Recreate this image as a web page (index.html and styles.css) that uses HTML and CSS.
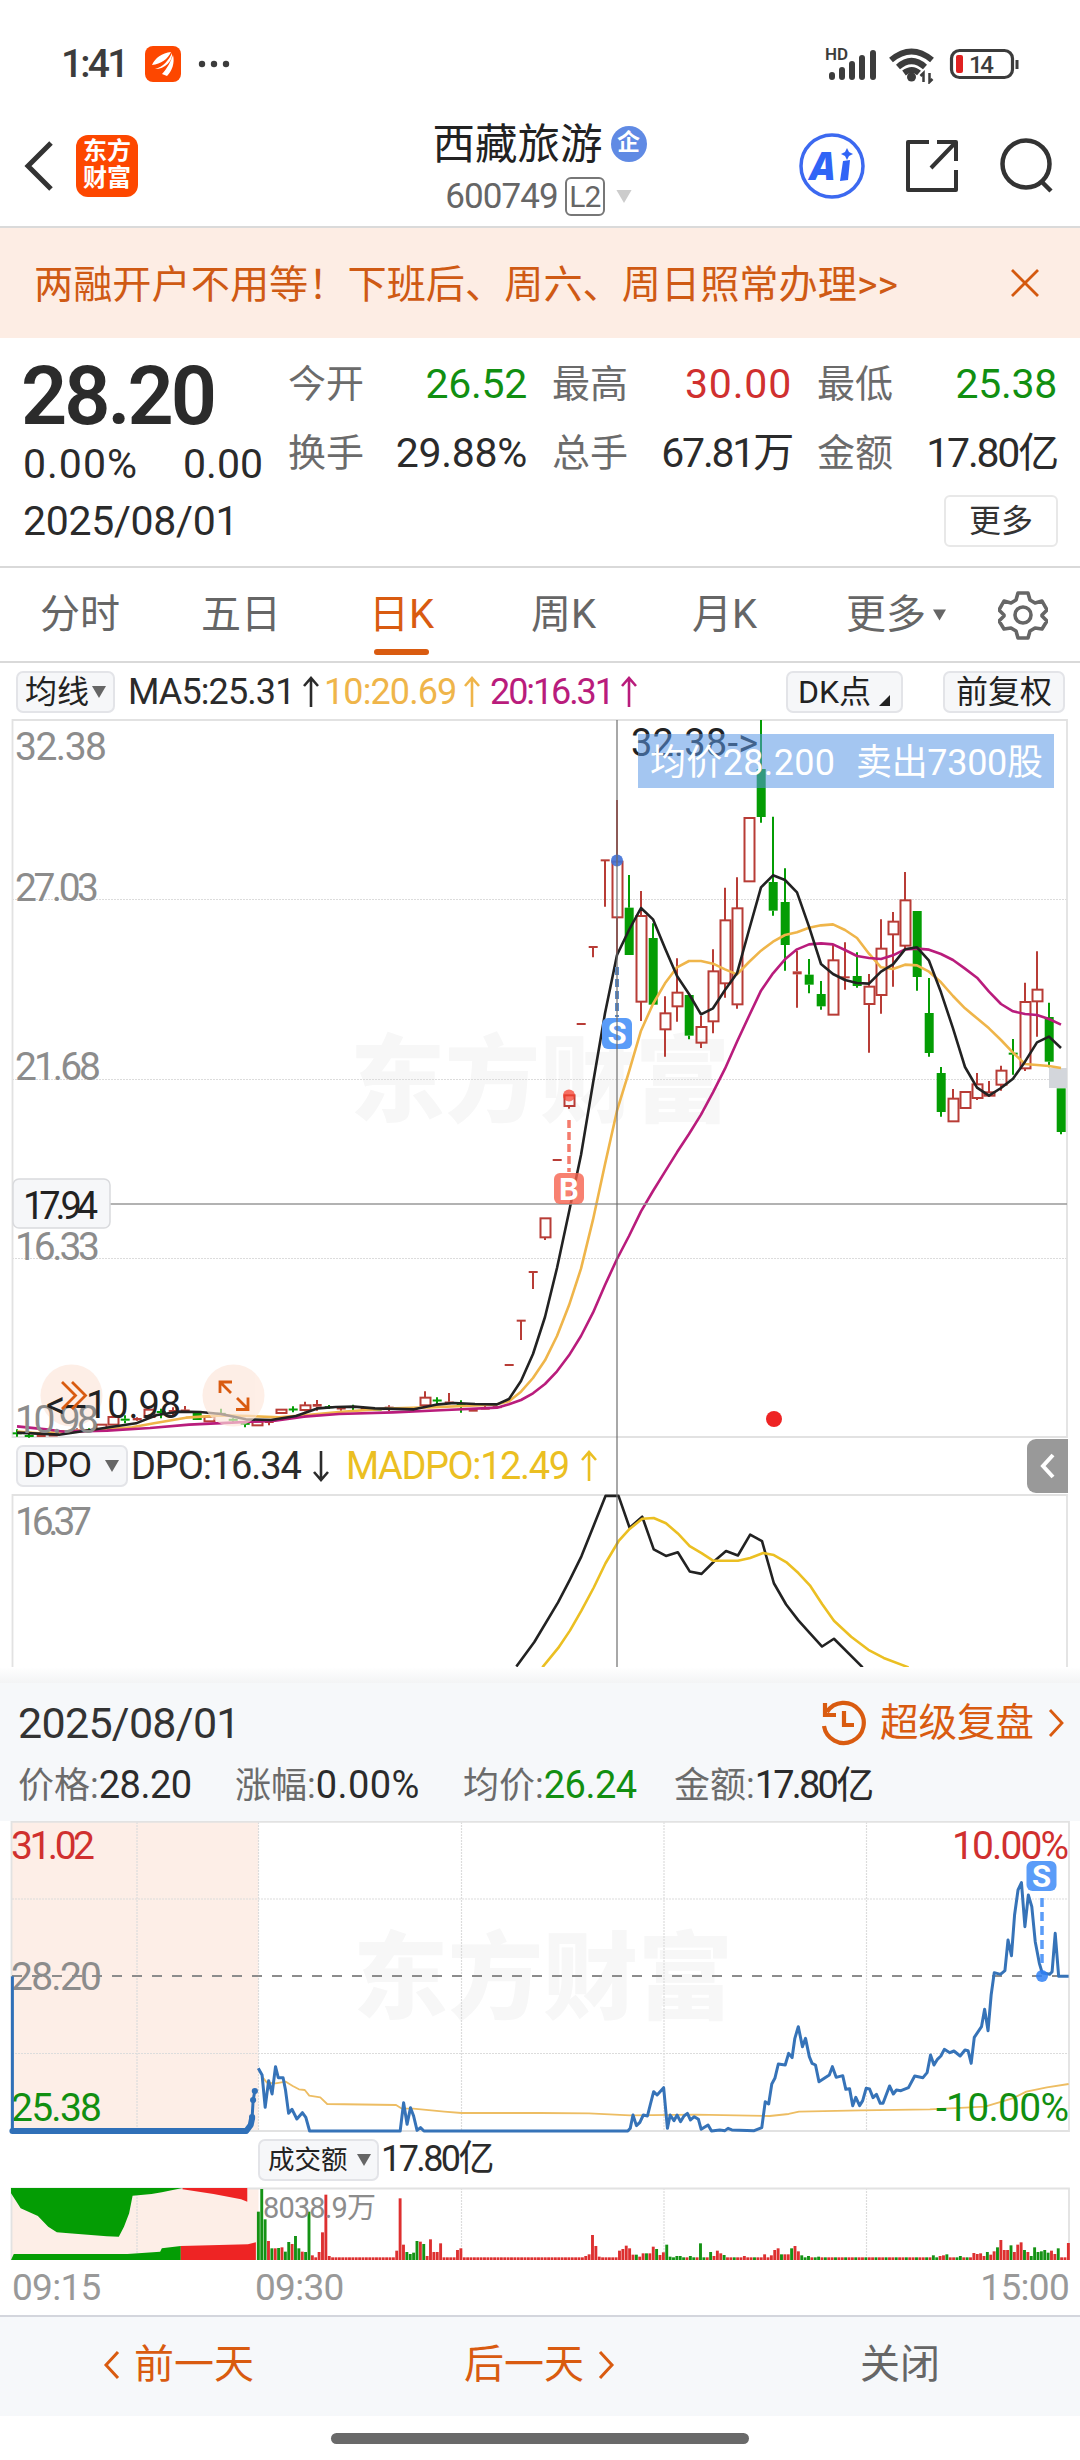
FILE: index.html
```html
<!DOCTYPE html>
<html lang="zh-CN">
<head>
  <meta charset="UTF-8">
  <meta name="viewport" content="width=device-width, initial-scale=1.0">
  <title>西藏旅游 600749</title>
  <link rel="stylesheet" href="styles.css">
</head>
<body>
  <svg width="0" height="0" class="defs">
    <symbol id="up" viewBox="0 0 18 32"><path d="M9 31V2M2 10l7-8 7 8" fill="none" stroke="currentColor" stroke-width="2.6"/></symbol>
    <symbol id="down" viewBox="0 0 18 32"><path d="M9 1v29M2 22l7 8 7-8" fill="none" stroke="currentColor" stroke-width="2.6"/></symbol>
    <symbol id="caret" viewBox="0 0 14 12"><path d="M0 0h14L7 12z" fill="currentColor"/></symbol>
  </svg>

  <div class="status">
    <span class="clock">1:41</span>
    <svg class="notice" width="36" height="36" viewBox="0 0 36 36">
      <rect width="36" height="36" rx="8" fill="#fd4700"/>
      <path d="M7 19C10 12 17 7 26 6 23 13 16 18 7 19zM10 23C18 21 24 14 27 7 28 15 20 23 10 23zM17 28C22 23 26 15 28 9 30 17 27 25 22 30z" fill="#fff"/>
    </svg>
    <svg width="34" height="8" viewBox="0 0 34 8" fill="#3c3c3c"><circle cx="5" cy="4" r="3.2"/><circle cx="17" cy="4" r="3.2"/><circle cx="29" cy="4" r="3.2"/></svg>
    <svg class="signals" width="200" height="40" viewBox="824 44 200 40">
      <text x="825" y="60" class="hd">HD</text>
      <g stroke="#3c3c3c" stroke-width="6" stroke-linecap="round">
        <path d="M832 75v2M842 70v7M852 64v13M862 58v19M873 53v24"/>
      </g>
      <g fill="none" stroke="#3c3c3c" stroke-width="6">
        <path d="M891 60q20.500-17 41 0M898 67q13.500-12 27 0M904 73q8-6 15 0"/>
      </g>
      <circle cx="911.500" cy="77" r="4.500" fill="#3c3c3c"/>
      <path d="M923.500 82v-9l-3 3M929.500 73v9l3-3" fill="none" stroke="#3c3c3c" stroke-width="2.500"/>
      <rect x="951.500" y="50.500" width="61" height="27" rx="8" fill="none" stroke="#3c3c3c" stroke-width="3.200"/>
      <rect x="956" y="55" width="7" height="18" rx="2" fill="#e02020"/>
      <path d="M1017 60v9" stroke="#3c3c3c" stroke-width="3"/>
      <text x="969" y="73" class="battery" textLength="25">14</text>
    </svg>
  </div>

  <header class="header">
    <div class="header-left">
      <svg width="30" height="52" viewBox="0 0 30 52"><path d="M27 3L4 26l23 23" fill="none" stroke="#333" stroke-width="5"/></svg>
      <div class="logo">东方<br>财富</div>
    </div>
    <div class="title">
      <div class="name">西藏旅游<span class="badge">企</span></div>
      <div class="code">600749<span class="level">L2</span><svg width="20" height="13" class="light"><use href="#caret"/></svg></div>
    </div>
    <div class="header-right">
      <svg width="66" height="66" viewBox="0 0 66 66">
        <circle cx="33" cy="33" r="31" fill="none" stroke="#3c69f0" stroke-width="3.500"/>
        <text x="11" y="47" class="ai" textLength="28">A</text>
        <path d="M44 28l7-1-2 20-8 1z" fill="#3064f6"/>
        <path d="M48 15l2 4 4 2-4 2-2 4-2-4-4-2 4-2z" fill="#3064f6"/>
      </svg>
      <svg width="54" height="54" viewBox="0 0 54 54" fill="none" stroke="#333" stroke-width="4" stroke-linejoin="round"><path d="M24 3H3v48h48V31M32 3h19v19M51 3L26 29"/></svg>
      <svg width="56" height="58" viewBox="0 0 56 58" fill="none" stroke="#333" stroke-width="4.500"><circle cx="27" cy="27" r="23.500"/><path d="M42 44l10 10"/></svg>
    </div>
  </header>

  <div class="banner">
    <span>两融开户不用等！下班后、周六、周日照常办理&gt;&gt;</span>
    <svg width="30" height="30" viewBox="0 0 30 30"><path d="M2 2l26 26M28 2L2 28" stroke="#d4590f" stroke-width="2.800"/></svg>
  </div>

  <section class="quote">
    <div class="last">
      <div class="price">28.20</div>
      <div class="change"><span class="pct">0.00%</span><span>0.00</span></div>
    </div>
    <div class="stats">
      <div><label>今开</label><b class="green">26.52</b></div>
      <div><label>最高</label><b class="red wide">30.00</b></div>
      <div><label>最低</label><b class="green">25.38</b></div>
      <div><label>换手</label><b>29.88%</b></div>
      <div><label>总手</label><b class="tight">67.81万</b></div>
      <div><label>金额</label><b class="tight">17.80亿</b></div>
    </div>
    <div class="date">2025/08/01</div>
    <button class="more">更多</button>
  </section>

  <nav class="tabs">
    <span>分时</span>
    <span>五日</span>
    <span class="active">日K</span>
    <span>周K</span>
    <span>月K</span>
    <span class="tab-more">更多<svg width="13" height="12"><use href="#caret"/></svg></span>
    <svg width="50" height="50" viewBox="0 0 50 50" fill="none" stroke="#666" stroke-width="3.600" stroke-linejoin="round">
      <path d="M20 3h10l2 7 5 3 7-2 5 9-5 5 0 1 5 5-5 8-7-1-5 3-2 7H20l-2-7-5-3-7 1-5-8 5-5v-1l-5-5 5-9 7 2 5-3z"/>
      <circle cx="25" cy="25" r="8"/>
    </svg>
  </nav>

  <div class="legend">
    <span class="pill ma-pill">均线<svg width="14" height="12"><use href="#caret"/></svg></span>
    <span class="ma ma5">MA5:25.31<svg width="18" height="32"><use href="#up"/></svg></span>
    <span class="ma ma10">10:20.69<svg width="18" height="32"><use href="#up"/></svg></span>
    <span class="ma ma20">20:16.31<svg width="18" height="32"><use href="#up"/></svg></span>
    <span class="pill dk">DK点<svg width="11" height="11" viewBox="0 0 11 11"><path d="M11 0v11H0z" fill="#222"/></svg></span>
    <span class="pill fq">前复权</span>
  </div>

  <div class="charts">
    <svg class="kline" width="1080" height="719" viewBox="0 719 1080 719">
      <text x="350" y="1115" class="mark" textLength="380">东方财富</text>
      <g class="grid">
        <path d="M12 899.500h1055M12 1079.500h1055M12 1258.500h1055"/>
      </g>
      <path class="frame" d="M12.500 1437V720H1067v717z"/>
      <rect x="1049" y="1068" width="18" height="20" fill="#d3d6db"/>
      <g id="candles"></g>
      <g id="averages"></g>
      <g class="axis">
        <text x="15" y="760" textLength="92">32.38</text>
        <text x="15" y="901" textLength="84">27.03</text>
        <text x="15" y="1080" textLength="86">21.68</text>
        <text x="15" y="1260" textLength="85">16.33</text>
      </g>
      <g fill="#fde6da" opacity=".65"><circle cx="71.500" cy="1395.500" r="31"/><circle cx="233.500" cy="1395.500" r="31"/></g>
      <g class="axis">
        <text x="15" y="1433" textLength="84">10.98</text>
      </g>
      <text x="46" y="1418" class="extreme" textLength="135">&lt;--10.98</text>
      <g class="tool">
        <path d="M62 1382l13.500 13.500L62 1409M72 1382l13.500 13.500L72 1409"/>
        <path d="M220 1393v-11h12M221 1383l10 10M236 1409.500h12v-12M247 1408l-10-10"/>
      </g>
      <text x="631" y="756" class="extreme" textLength="127">32.38-&gt;</text>
      <rect x="638" y="734" width="416" height="54" fill="#5a97e6" opacity=".55"/>
      <text x="650" y="775" class="tip" textLength="185">均价28.200</text>
      <text x="856" y="775" class="tip" textLength="187">卖出7300股</text>
      <path d="M110 1204h957" stroke="#999" stroke-width="1.500"/>
      <path d="M617 967v50" stroke="#5a8ac8" stroke-width="4" stroke-dasharray="8 4"/>
      <circle cx="617" cy="860.500" r="6" fill="#3f70d6" opacity=".9"/>
      <path d="M569 1120v52" stroke="#f47b6c" stroke-width="3.500" stroke-dasharray="8 4"/>
      <circle cx="569" cy="1095.500" r="6" fill="#f5402f" opacity=".75"/>
      <rect x="602" y="1018" width="30" height="31" rx="6" fill="#5a9cf8"/>
      <text x="617" y="1044" class="flag">S</text>
      <rect x="554" y="1173" width="30" height="31" rx="6" fill="#f6614e" opacity=".8"/>
      <text x="569" y="1200" class="flag">B</text>
      <rect x="13" y="1179" width="97" height="49" rx="6" fill="#f6f7f9" stroke="#d9dadd" stroke-width="1.500"/>
      <text x="23" y="1219" class="extreme" textLength="75">17.94</text>
      <circle cx="774" cy="1419" r="8" fill="#ee2424"/>
    </svg>
    <div class="dpo-row">
      <span class="pill dpo-pill">DPO<svg width="14" height="12"><use href="#caret"/></svg></span>
      <span class="dpo">DPO:16.34<svg width="18" height="34"><use href="#down"/></svg></span>
      <span class="dpo madpo">MADPO:12.49<svg width="18" height="34"><use href="#up"/></svg></span>
      <span class="fold"><svg width="16" height="26" viewBox="0 0 16 26"><path d="M13 2L3 13l10 11" fill="none" stroke="#fff" stroke-width="4"/></svg></span>
    </div>
    <svg class="dpo-chart" width="1080" height="173" viewBox="0 1494 1080 173">
      <path class="frame" d="M12.500 1667V1495H1067V1667"/>
      <text x="15" y="1535" class="axis" textLength="77">16.37</text>
      <g id="dpo"></g>
    </svg>
    <div class="crosshair"></div>
  </div>

  <section class="review">
    <div class="review-top">
      <span class="day">2025/08/01</span>
      <span class="replay">
        <svg width="44" height="46" viewBox="0 0 44 46" fill="none" stroke="#d95b10" stroke-width="4.200"><path d="M5 12a20 20 0 1 1-3 14M3 3v12h11M22 11v14h10"/></svg>
        超级复盘
        <svg width="16" height="30" viewBox="0 0 16 30" fill="none" stroke="#d95b10" stroke-width="2.800"><path d="M2 2l12 13L2 28"/></svg>
      </span>
    </div>
    <div class="review-info">
      <span class="i1">价格:<b>28.20</b></span>
      <span class="i2">涨幅:<b class="wide">0.00%</b></span>
      <span class="i3">均价:<b class="green">26.24</b></span>
      <span>金额:<b class="tight">17.80亿</b></span>
    </div>
  </section>

  <div class="minute">
    <svg width="1080" height="316" viewBox="0 1821 1080 316">
      <rect x="12" y="1822" width="246.500" height="309" fill="#fdeee7"/>
      <text x="353" y="2012" class="mark" textLength="380">东方财富</text>
      <g class="grid"><path d="M12 1899h1057M12 2053.500h1057M137 1822v309M258.500 1822v309M461.500 1822v309M664 1822v309M866.500 1822v309"/></g>
      <path class="frame" d="M11.500 1821.800H1069V2131H11.500z"/>
      <path d="M12 1976h1057" stroke="#8c8c8c" stroke-width="2" stroke-dasharray="10 10"/>
      <g class="axis">
        <text x="11" y="1859" class="t-red" textLength="84">31.02</text>
        <text x="11" y="1990" textLength="91">28.20</text>
        <text x="11" y="2121" class="t-green" textLength="91">25.38</text>
        <text x="952" y="1859" class="t-red" textLength="117">10.00%</text>
      </g>
      <g id="price"></g>
      <text x="936" y="2121" class="axis t-green" textLength="133">-10.00%</text>
      <path d="M1042 1898v68" stroke="#5a9cf8" stroke-width="3.500" stroke-dasharray="9 5"/>
      <circle cx="1042" cy="1976" r="6" fill="#2f80f5" opacity=".85"/>
      <rect x="1026.500" y="1861" width="30" height="30" rx="6" fill="#5a9cf8"/>
      <text x="1041.500" y="1887" class="flag">S</text>
    </svg>
    <div class="turnover">
      <span class="pill">成交额<svg width="14" height="12"><use href="#caret"/></svg></span>
      <span class="sum">17.80亿</span>
    </div>
    <svg width="1080" height="77" viewBox="0 2186 1080 77">
      <rect x="12" y="2188" width="246.500" height="72" fill="#fdeee7"/>
      <g class="grid"><path d="M137 2188v72M461.500 2188v72M664 2188v72M866.500 2188v72"/></g>
      <path class="frame" d="M11.500 2260V2188.500H1069V2260"/>
      <g id="volume"></g>
      <text x="263" y="2218" class="vol-label" textLength="113">8038.9万</text>
    </svg>
    <div class="times"><span>09:15</span><span>09:30</span><span>15:00</span></div>
  </div>

  <footer class="footer">
    <span class="prev"><svg width="18" height="30" viewBox="0 0 18 30"><path d="M15 2L3 15l12 13"/></svg>前一天</span>
    <span class="next">后一天<svg width="18" height="30" viewBox="0 0 18 30"><path d="M3 2l12 13L3 28"/></svg></span>
    <span class="close">关闭</span>
  </footer>
  <div class="home"></div>

  <script src="chart.js"></script>
</body>
</html>
```
FILE: styles.css
```css
* {
  margin: 0;
  padding: 0;
  box-sizing: border-box;
}

body {
  width: 1080px;
  height: 2460px;
  background: #fff;
  font-family: Roboto, "Noto Sans CJK SC", sans-serif;
  color: #2b2b2b;
  overflow: hidden;
}

svg {
  display: block;
  flex: none;
}

.defs {
  position: absolute;
}

.green { color: #118f11; }
.red { color: #d0302f; }

.status {
  height: 92px;
  padding: 36px 56px 0 61px;
  display: flex;
  align-items: center;
}

.clock {
  width: 84px;
  font-size: 39px;
  font-weight: 500;
  letter-spacing: -2.8px;
  color: #3c3c3c;
}

.notice {
  margin-right: 16px;
}

.signals {
  margin-left: auto;
}

.hd {
  font-size: 17px;
  font-weight: 600;
  fill: #3c3c3c;
}

.battery {
  font-size: 24px;
  font-weight: 500;
  fill: #3c3c3c;
}

.header {
  height: 136px;
  padding: 0 25px 0 24px;
  display: grid;
  grid-template-columns: 1fr auto 1fr;
  align-items: center;
  border-bottom: 2px solid #dadada;
}

.header-left {
  display: flex;
  align-items: center;
  gap: 22px;
  padding-top: 14px;
}

.logo {
  width: 62px;
  height: 62px;
  border-radius: 12px;
  background: #fd4700;
  color: #fff;
  font-size: 24px;
  line-height: 27px;
  font-weight: 700;
  text-align: center;
  padding-top: 3px;
}

.title {
  color: #222;
  padding-top: 21px;
}

.name {
  display: flex;
  align-items: center;
  font-size: 42.5px;
  line-height: 54px;
}

.badge {
  width: 36px;
  height: 36px;
  margin-left: 8px;
  margin-bottom: 2px;
  border-radius: 50%;
  background: #608ae4;
  color: #fff;
  font-size: 23px;
  font-weight: 700;
  line-height: 34px;
  text-align: center;
}

.code {
  display: flex;
  align-items: center;
  justify-content: center;
  font-size: 35px;
  letter-spacing: -0.9px;
  line-height: 50px;
  color: #666;
}

.level {
  width: 40px;
  height: 39px;
  margin: 0 9px 0 7px;
  border: 2px solid #777;
  border-radius: 6px;
  font-size: 30px;
  line-height: 36px;
  text-align: center;
}

.light { color: #ccc; }

.header-right {
  display: flex;
  align-items: center;
  justify-content: flex-end;
  gap: 40px;
  padding-top: 14px;
}

.ai {
  font-family: "Noto Sans", sans-serif;
  font-size: 38px;
  font-weight: 900;
  font-style: italic;
  fill: #3064f6;
}

.banner {
  height: 110px;
  padding: 0 40px 0 34px;
  display: flex;
  align-items: center;
  justify-content: space-between;
  background: #fdede4;
  color: #cf5a14;
  font-size: 39.2px;
}

.banner span {
  padding-bottom: 5px;
}

.quote {
  height: 230px;
  padding: 20px 22px 0 23px;
  display: grid;
  grid-template-columns: 265px 1fr;
  grid-template-rows: 137px 52px;
  border-bottom: 2px solid #d9d9d9;
}

.price {
  font-size: 81px;
  line-height: 84px;
  font-weight: 600;
  letter-spacing: -3px;
  margin-left: -2px;
  margin-top: -3px;
}

.change {
  display: flex;
  justify-content: space-between;
  width: 240px;
  font-size: 41px;
  line-height: 47px;
  padding-top: 2px;
}

.pct { letter-spacing: 1px; }

.stats {
  display: grid;
  grid-template-columns: 239px 240px 240px;
  grid-auto-rows: 69px;
  column-gap: 25px;
}

.stats div {
  display: flex;
  justify-content: space-between;
  line-height: 53px;
}

.stats label {
  font-size: 38px;
  color: #6b6b6b;
}

.stats b {
  font-size: 41px;
  font-weight: 400;
  letter-spacing: -0.3px;
}

.stats .wide { letter-spacing: 0.8px; }
.stats .tight { letter-spacing: -2.2px; }

.date {
  font-size: 41px;
  line-height: 52px;
  letter-spacing: -0.3px;
}

.more {
  justify-self: end;
  width: 114px;
  height: 52px;
  font: inherit;
  font-size: 32px;
  color: #333;
  line-height: 46px;
  background: #fff;
  border: 2px solid #e8e8e8;
  border-radius: 6px;
}

.tabs {
  height: 95px;
  padding: 0 31px 0 40px;
  display: flex;
  align-items: center;
  font-size: 40px;
  line-height: 93px;
  color: #666;
  border-bottom: 2px solid #d9d9d9;
}

.tabs span { width: 161px; }
.tabs span:nth-child(2) { width: 168px; }
.tabs span:nth-child(3) { width: 162px; }
.tabs span:nth-child(5) { width: 154px; }

.tabs .active {
  color: #d95b10;
  position: relative;
}

.active::after {
  content: "";
  position: absolute;
  left: 5px;
  bottom: 6px;
  width: 55px;
  height: 6px;
  border-radius: 3px;
  background: #d95b10;
}

.tabs .tab-more {
  display: flex;
  align-items: center;
  gap: 7px;
  width: 152px;
}

.legend {
  height: 56px;
  padding: 1px 15px 0 16px;
  display: flex;
  align-items: center;
}

.pill {
  height: 42px;
  display: flex;
  align-items: center;
  background: #f6f7f9;
  border: 2px solid #e3e4e8;
  border-radius: 7px;
  font-size: 32px;
  line-height: 36px;
  color: #222;
}

.pill svg { color: #666; }

.ma-pill {
  width: 99px;
  padding-left: 7px;
  gap: 3px;
  margin-right: 13px;
}

.ma {
  display: flex;
  align-items: center;
  gap: 7px;
  font-size: 36px;
  letter-spacing: -0.9px;
}

.ma5 { width: 196px; }
.ma10 { width: 166px; color: #efb54a; }
.ma20 { color: #b91c7c; letter-spacing: -2.1px; }

.dk {
  width: 117px;
  padding-left: 10px;
  margin-left: auto;
  gap: 8px;
}

.dk svg { margin-top: 18px; }

.fq {
  width: 122px;
  margin-left: 40px;
  padding-left: 11px;
}

.charts {
  position: relative;
  height: 948px;
}

.crosshair {
  position: absolute;
  left: 616px;
  top: 1px;
  width: 2px;
  height: 947px;
  background: rgba(110, 110, 110, .6);
}

.mark {
  font-size: 95px;
  font-weight: 900;
  fill: #f7f7f7;
}

.grid {
  stroke: #dcdcdc;
  stroke-width: 1.2;
  stroke-dasharray: 2 1;
}

.frame {
  fill: none;
  stroke: #e2e2e2;
  stroke-width: 1.8;
}

.axis {
  font-size: 39px;
  fill: #8c8c8c;
}

.t-red { fill: #d0302f; }
.t-green { fill: #118f11; }

.extreme {
  font-size: 38px;
  fill: #222;
}

.tip {
  font-size: 36px;
  fill: #fff;
}

.tool {
  fill: none;
  stroke: #d95b10;
  stroke-width: 2.8;
}

.flag {
  font-size: 31px;
  font-weight: 700;
  fill: #fff;
  text-anchor: middle;
}

.dpo-row {
  height: 56px;
  padding-left: 16px;
  display: flex;
  align-items: center;
}

.dpo-pill {
  width: 112px;
  padding-left: 5px;
  gap: 13px;
  margin-right: 3px;
  font-size: 35px;
}

.dpo {
  display: flex;
  align-items: center;
  gap: 11px;
  width: 215px;
  font-size: 38px;
  letter-spacing: -1.1px;
}

.madpo {
  width: auto;
  color: #ebbf22;
  letter-spacing: -1.4px;
}

.fold {
  width: 41px;
  height: 54px;
  margin: 0 12px 0 auto;
  display: flex;
  align-items: center;
  justify-content: center;
  background: #999;
  border-radius: 9px 0 0 9px;
}

.line {
  fill: none;
  stroke-width: 3;
  stroke-linejoin: round;
}

.scaled * {
  vector-effect: non-scaling-stroke;
}

.review {
  height: 154px;
  background: linear-gradient(#fff, #f3f4f5 16px, #f6f8fa 16px);
  padding: 29px 16px 0 18px;
}

.review-top {
  display: flex;
  justify-content: space-between;
  align-items: center;
  height: 54px;
}

.day {
  font-size: 43px;
  letter-spacing: -0.7px;
  color: #333;
}

.replay {
  display: flex;
  align-items: center;
  gap: 14px;
  font-size: 38.5px;
  line-height: 50px;
  color: #d95b10;
}

.review-info {
  display: flex;
  padding-top: 11px;
  font-size: 36px;
  line-height: 48px;
  color: #6b6b6b;
}

.review-info b {
  font-weight: 400;
  font-size: 38px;
  letter-spacing: -0.5px;
}

.review-info .wide { letter-spacing: 0.4px; }
.review-info .tight { letter-spacing: -2.8px; }

.review-info b:not(.green) { color: #2b2b2b; }

.i1 { width: 217px; }
.i2 { width: 228px; }
.i3 { width: 211px; }

.turnover {
  height: 49px;
  padding: 2px 0 0 258px;
  display: flex;
  gap: 2px;
  font-size: 36px;
  line-height: 41px;
}

.sum { letter-spacing: -2.6px; }

.turnover .pill {
  width: 121px;
  padding-left: 8px;
  gap: 9px;
  font-size: 26.5px;
}

.vol-label {
  font-size: 29px;
  fill: #8c8c8c;
}

.times {
  height: 52px;
  padding: 1px 11px 0 12px;
  display: flex;
  font-size: 37px;
  line-height: 48px;
  letter-spacing: -0.7px;
  color: #999;
}

.times span:first-child { width: 243px; }
.times span:last-child { margin-left: auto; }

.footer {
  height: 101px;
  display: flex;
  align-items: center;
  padding-bottom: 3px;
  background: #f6f8fa;
  border-top: 2px solid #d4d6dd;
  font-size: 40px;
  line-height: 50px;
  color: #d95b10;
}

.footer span {
  display: flex;
  align-items: center;
  gap: 13px;
}

.footer svg {
  fill: none;
  stroke: #d95b10;
  stroke-width: 3;
}

.prev { width: 361px; padding-left: 103px; }
.next { width: 499px; padding-left: 103px; }
.footer .close { color: #666; }

.home {
  width: 418px;
  height: 11px;
  margin: 17px auto 0;
  border-radius: 6px;
  background: #696969;
}
```
FILE: chart.js
```js
const NS = 'http://www.w3.org/2000/svg';
const RED = '#b83c36';
const GREEN = '#049d04';

function add(parent, tag, attrs) {
  const el = document.createElementNS(NS, tag);
  for (const k in attrs) el.setAttribute(k, attrs[k]);
  parent.appendChild(el);
  return el;
}

// daily candles: colour, high, body top, body bottom, low (thirds of a pixel)
const candles = [
  'g 2188 2198 2202 2210', 'g 2200 2207 2209 2213', 'r 2203 2204 2211 2211', 'r 2203 2205 2208 2208', 'r 2192 2192 2194 2194',
  'r 2185 2188 2194 2196', 'g 2185 2188 2194 2194', 'r 2174 2174 2188 2188', 'r 2150 2151 2174 2174', 'g 2146 2156 2162 2170',
  'r 2152 2154 2161 2163', 'r 2127 2129 2151 2151', 'g 2126 2133 2139 2155', 'r 2122 2131 2135 2145', 'r 2118 2129 2134 2138',
  'g 2133 2133 2160 2160', 'r 2148 2150 2164 2164', 'g 2126 2140 2143 2146', 'g 2155 2157 2162 2166', 'g 2165 2170 2173 2182',
  'r 2163 2165 2176 2176', 'r 2160 2164 2168 2176', 'r 2128 2129 2139 2142', 'g 2119 2127 2130 2137', 'r 2105 2116 2130 2134',
  'r 2100 2112 2120 2132', 'g 2115 2120 2123 2127', 'r 2121 2125 2126 2132', 'g 2114 2120 2122 2134', 'r 2126 2126 2128 2128',
  'g 2128 2128 2130 2130', 'r 2116 2120 2127 2133', 'r 2123 2123 2127 2127', 'g 2124 2124 2128 2128', 'r 2074 2093 2116 2116',
  'g 2092 2100 2103 2112', 'r 2079 2105 2110 2110', 'g 2101 2110 2114 2138', 'r 2125 2126 2135 2135', 'r 2115 2123 2129 2129',
  'r 2120 2120 2123 2123', 'r 1995 1995 1995 1995', 'r 1862 1862 1862 1920', 'r 1716 1716 1716 1767', 'r 1555 1555 1612 1620',
  'r 1380 1380 1380 1380', 'r 1186 1186 1218 1226', 'r 972 972 972 972', 'r 741 741 741 772', 'r 481 481 481 620',
  'r 300 485 652 765', 'g 525 623 765 765', 'r 573 648 905 963', 'g 670 714 914 914', 'r 889 940 988 1070',
  'r 775 878 919 965', 'g 883 885 1007 1018', 'r 948 981 1028 1044', 'r 748 814 964 1000', 'r 563 661 850 893',
  'r 532 625 913 926', 'r 354 354 544 544', 'g 60 207 351 368', 'g 350 546 632 647', 'g 505 606 735 812',
  'r 752 814 823 923', 'g 777 824 854 880', 'g 843 882 919 929', 'r 735 781 944 944', 'r 727 831 833 869',
  'g 757 828 858 863', 'r 822 860 912 1058', 'r 658 746 885 941', 'r 636 665 703 860', 'r 516 601 737 745',
  'g 633 633 831 872', 'g 834 939 1059 1070', 'g 1101 1119 1236 1250', 'r 1167 1196 1264 1264', 'r 1176 1176 1224 1224',
  'r 1119 1153 1194 1200', 'r 1143 1177 1187 1187', 'r 1097 1112 1154 1172', 'g 1017 1058 1064 1124', 'r 848 906 1105 1113',
  'r 754 869 904 1010', 'g 908 951 1085 1102', 'g 1165 1165 1296 1303'
];

const py = v => 700 + v / 3;
const first = 17;
const step = 12;
const kbox = document.getElementById('candles');

candles.forEach((row, i) => {
  const [c, ...n] = row.split(' ');
  const [hi, top, bot, lo] = n.map(v => py(Number(v)));
  const x = first + i * step;
  const color = c == 'r' ? RED : GREEN;
  add(kbox, 'path', { d: `M${x} ${hi}V${top}M${x} ${bot}V${lo}`, stroke: color, 'stroke-width': 2 });
  if (c == 'r' && bot - top > 3) {
    add(kbox, 'rect', { x: x - 4.5, y: top, width: 10, height: bot - top, fill: 'none', stroke: color, 'stroke-width': 2 });
  } else {
    const h = Math.max(bot - top, 2);
    add(kbox, 'rect', { x: x - 4.3, y: (top + bot - h) / 2, width: 9, height: h, fill: color });
  }
});

// moving averages: a short list of [x, y] for the flat part, then one value per day from x = 497
const averages = [
  ['#efb54a',
    [[17, 2195], [39, 2200], [96, 2190], [132, 2182], [154, 2170], [186, 2153], [221, 2146], [250, 2148], [279, 2152], [304, 2146], [339, 2136], [386, 2126], [429, 2122], [464, 2118]],
    [2113, 2104, 2075, 2034, 1981, 1908, 1816, 1706, 1559, 1393, 1232, 1115, 992, 912, 850, 802, 783, 783, 791, 808, 823, 786, 752, 725, 705, 697, 683, 676, 673, 690, 714, 761, 802, 807, 794, 796, 815, 847, 888, 925, 955, 985, 1020, 1058, 1092, 1095, 1098, 1104]],
  ['#b91c7c',
    [[17, 2179], [46, 2188], [64, 2195], [107, 2192], [150, 2184], [189, 2174], [232, 2168], [275, 2162], [304, 2150], [339, 2142], [393, 2137], [446, 2130]],
    [2123, 2113, 2100, 2080, 2052, 2014, 1966, 1908, 1838, 1755, 1677, 1608, 1534, 1473, 1415, 1357, 1302, 1244, 1177, 1106, 1025, 948, 872, 820, 778, 748, 733, 730, 733, 750, 768, 774, 777, 766, 748, 746, 749, 762, 780, 806, 833, 875, 912, 934, 942, 945, 957, 974]],
  ['#222',
    [[17, 2198], [59, 2204], [96, 2188], [136, 2170], [157, 2145], [179, 2135], [200, 2136], [221, 2142], [246, 2158], [271, 2160], [296, 2148], [318, 2125], [336, 2121], [354, 2120], [375, 2125], [414, 2128], [436, 2114], [454, 2109], [475, 2112]],
    [2113, 2097, 2043, 1962, 1851, 1704, 1536, 1365, 1150, 940, 765, 690, 624, 658, 745, 828, 882, 943, 925, 870, 820, 690, 562, 526, 540, 577, 680, 792, 822, 840, 849, 851, 815, 793, 748, 742, 782, 877, 985, 1101, 1163, 1187, 1164, 1136, 1085, 1027, 1010, 1044]]
];

averages.forEach(([color, flat, days]) => {
  const pts = flat.concat(days.map((v, i) => [497 + i * step, v])).map(p => [p[0], py(p[1])]);
  add(document.getElementById('averages'), 'polyline', { class: 'line', style: 'stroke-width:2.6', points: pts.join(' '), stroke: color });
});

// DPO
const dpo = document.getElementById('dpo');
dpo.setAttribute('class', 'scaled');
dpo.setAttribute('transform', 'translate(480 1040) scale(.38265 .40816)');
add(dpo, 'polyline', { class: 'line', style: 'stroke-width:2.6', stroke: '#222', points: '95,1535 142,1475 204,1378 235,1322 265,1265 297,1190 328,1117 362,1117 391,1195 424,1168 454,1248 486,1264 517,1255 548,1302 579,1308 612,1277 643,1252 674,1263 706,1212 737,1228 768,1331 800,1383 832,1422 862,1453 894,1486 925,1467 1000,1537' });
add(dpo, 'polyline', { class: 'line', style: 'stroke-width:2.6', stroke: '#ebbf22', points: '163,1537 204,1490 235,1447 265,1398 297,1342 328,1282 362,1228 391,1198 424,1173 454,1171 486,1184 517,1209 548,1240 579,1257 610,1276 674,1276 706,1269 740,1257 768,1262 800,1279 832,1306 862,1336 894,1382 925,1423 970,1462 1015,1494 1055,1514 1120,1537' });

// minute chart
const price = document.getElementById('price');
const SCALE = 'translate(0 1810) scale(.34439 .33333)';
price.setAttribute('class', 'scaled');
price.setAttribute('transform', SCALE);
add(price, 'polyline', { class: 'line', style: 'stroke-width:1.8', stroke: '#edbd63', points: '761,800 775,818 800,820 830,815 850,828 868,838 885,840 898,857 930,862 950,882 1150,885 1165,895 1200,896 1290,905 1340,909 1568,909 1710,910 1830,916 2020,914 2235,918 2290,912 2320,905 2500,901 2700,898 2860,890 2940,865 2980,845 3040,832 3103,822' });
add(price, 'polyline', { class: 'line', stroke: '#3673b8', points: '750,775 761,795 770,892 780,812 790,852 800,770 808,803 822,803 829,840 838,910 848,898 862,927 878,908 888,922 899,963 1162,963 1172,878 1182,943 1192,893 1201,918 1211,961 1221,953 1231,963 1823,963 1830,955 1838,915 1848,947 1858,937 1868,915 1880,918 1888,885 1898,845 1908,855 1927,833 1938,955 1946,915 1957,932 1966,915 1976,935 1986,918 1996,910 2005,930 2016,920 2028,928 2036,958 2056,945 2066,963 2090,960 2105,962 2114,955 2125,960 2190,962 2212,953 2222,875 2232,882 2241,822 2250,805 2260,762 2280,765 2290,730 2300,743 2308,685 2318,650 2330,710 2339,685 2350,740 2358,760 2368,765 2378,815 2408,795 2417,770 2428,802 2447,797 2456,838 2467,836 2476,887 2485,862 2496,887 2505,872 2515,835 2525,837 2535,863 2545,853 2556,880 2564,880 2583,828 2594,852 2603,840 2616,842 2638,833 2656,798 2680,803 2692,788 2702,735 2712,765 2722,748 2732,738 2742,718 2758,728 2770,723 2788,738 2802,720 2811,722 2820,760 2829,682 2850,650 2859,598 2869,662 2878,555 2887,488 2905,493 2918,482 2927,390 2937,437 2946,315 2956,240 2966,218 2976,350 2986,255 2996,290 3006,395 3018,460 3026,488 3048,493 3055,485 3064,370 3074,499 3103,499' });
// call auction
add(price, 'polyline', { class: 'line', stroke: '#3070b8', points: '36,499 36,963' });
add(price, 'polyline', { class: 'line', style: 'stroke-width:6;stroke-linecap:round', stroke: '#3070b8', points: '36,963 715,963 728,945 732,925' });
add(price, 'polyline', { class: 'line', stroke: '#3070b8', points: '732,925 735,870 740,843' });
[[732, 921], [735, 870], [740, 843]].forEach(p => add(price, 'circle', { cx: p[0], cy: p[1], r: 9, fill: '#3070b8' }));

// turnover bars
const volume = document.getElementById('volume');
volume.setAttribute('transform', SCALE);
const R = '#ee2424';
add(volume, 'path', { fill: GREEN, d: 'M32 1134H530L470 1147 440 1152 385 1157 375 1210 360 1250 345 1280 310 1279 200 1270 165 1267 140 1250 110 1218 60 1195 32 1150zM32 1350L40 1332H370L465 1325 470 1315 525 1308V1350z' });
add(volume, 'path', { fill: R, d: 'M530 1134H718V1175L700 1168 620 1152 530 1138zM525 1308L720 1303 743 1297V1350H525z' });

const bars = 'g750:145 g760:213 g770:122 r780:57 g790:35 r799:35 g809:36 r819:38 g829:25 g838:54 r848:48 g858:72 g868:35 r878:25 g887:24 g897:145 r907:14 r917:8 r927:24 r937:83 r946:196 r957:12 r1152:28 r1162:185 r1172:46 g1182:24 g1192:18 g1201:22 g1211:57 r1221:55 g1231:48 r1240:12 r1250:62 r1260:24 r1270:24 r1280:50 r1330:30 r1340:35 '
  + 'r1701:12 r1711:17 r1720:75 r1731:42 r1740:10 r1799:28 r1809:33 r1819:43 r1829:35 r1838:16 g1848:16 r1858:10 r1868:20 g1878:20 r1888:20 r1898:40 g1908:33 r1918:15 r1927:23 g1937:46 g1946:10 g1966:12 g1976:12 g2005:12 g2034:50 g2064:24 r2074:12 r2084:28 r2093:20 g2103:15 r2161:12 r2221:17 r2241:14 r2250:30 r2260:35 g2270:17 r2280:17 r2290:17 g2299:35 r2310:42 r2319:26 g2329:14 g2349:12 g2378:10 '
  + 'g2710:14 r2730:12 r2740:14 g2750:17 g2789:12 r2828:21 r2838:18 r2848:20 r2858:12 g2868:24 r2878:16 r2888:26 g2897:38 r2907:60 r2917:30 r2927:30 g2937:44 r2946:24 r2956:46 r2966:53 g2976:30 r2986:24 g2996:12 g3005:38 g3015:24 g3025:26 g3035:30 g3045:22 r3054:28 r3064:18 g3074:35 r3084:8 r3101:51';
const slots = {};
bars.split(' ').forEach(b => {
  const [x, h] = b.slice(1).split(':').map(Number);
  slots[Math.round((x - 750) / 9.8)] = [b[0], h];
});
for (let i = 0; i <= 240; i++) {
  const quiet = i > 115 && i % 3 == 0 ? 'g' : 'r';
  const [c, h] = slots[i] || [quiet, 8];
  add(volume, 'rect', { x: 746 + i * 9.8, y: 1350 - h, width: 8.4, height: h, fill: c == 'r' ? '#dd3030' : '#149214' });
}
```
